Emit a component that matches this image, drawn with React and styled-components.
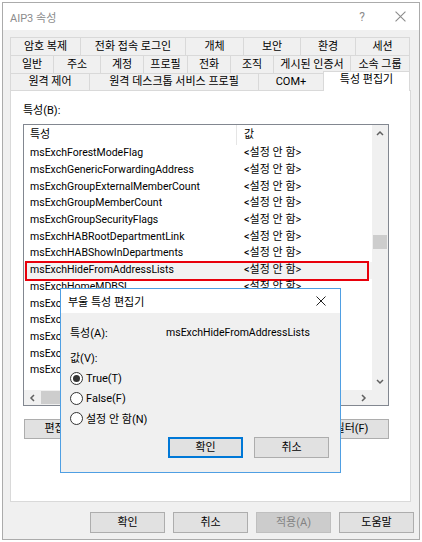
import styled, { createGlobalStyle } from 'styled-components'

const GlobalStyle = createGlobalStyle`
  body {
    margin: 0;
    background: #fff;
    font-family: Roboto, "Noto Sans CJK KR", sans-serif;
    font-size: 11px;
    color: #000;
  }
`

const topTabs = [
  { label: '암호 복제', w: 71 },
  { label: '전화 접속 로그인', w: 106 },
  { label: '개체', w: 59 },
  { label: '보안', w: 58 },
  { label: '환경', w: 56 },
  { label: '세션', w: 55 },
]

const midTabs = [
  { label: '일반', w: 44 },
  { label: '주소', w: 48 },
  { label: '계정', w: 44 },
  { label: '프로필', w: 45 },
  { label: '전화', w: 44 },
  { label: '조직', w: 44 },
  { label: '게시된 인증서', w: 78 },
  { label: '소속 그룹', w: 60 },
]

const bottomTabs = [
  { label: '원격 제어', w: 80 },
  { label: '원격 데스크톱 서비스 프로필', w: 170 },
  { label: 'COM+', w: 66 },
  { label: '특성 편집기', w: 87, active: true },
]

const attrs = [
  'msExchForestModeFlag',
  'msExchGenericForwardingAddress',
  'msExchGroupExternalMemberCount',
  'msExchGroupMemberCount',
  'msExchGroupSecurityFlags',
  'msExchHABRootDepartmentLink',
  'msExchHABShowInDepartments',
  'msExchHideFromAddressLists',
  'msExchHomeMDBSL',
  'msExchHomeServerName',
  'msExchImmutableId',
  'msExchIntendedMailboxPlan',
  'msExchLabeledURI',
  'msExchLitigationHoldDate',
]

const Window = styled.div`
  position: relative;
  margin: 2px;
  width: 418px;
  height: 538px;
  box-sizing: border-box;
  border: 1px solid #ababab;
  background: #f0f0f0;
  display: flex;
  flex-direction: column;
`

const TitleBar = styled.div`
  height: 27px;
  background: #fff;
  display: flex;
  align-items: center;
  padding-left: 7px;
  color: #8c8c8c;
`

const TitleText = styled.span`
  flex: 1;
`

const CaptionButton = styled.div`
  width: 38px;
  height: 27px;
  display: flex;
  align-items: center;
  justify-content: center;
  color: #8c8c8c;
  font-size: 12px;
`

const TabStrip = styled.div`
  padding: 7px 8px 0 7px;
  display: flex;
  flex-direction: column;
`

const TabRow = styled.div`
  display: flex;
  height: ${p => p.$h}px;
`

const Tab = styled.div`
  width: ${p => p.$w}px;
  box-sizing: border-box;
  margin-left: -1px;
  &:first-child { margin-left: 0; }
  border: 1px solid #d9d9d9;
  border-bottom: none;
  background: ${p => (p.$active ? '#fff' : '#f0f0f0')};
  display: flex;
  align-items: center;
  justify-content: center;
  line-height: 14px;
  position: relative;
  z-index: ${p => (p.$active ? 2 : 1)};
  margin-top: ${p => (p.$active ? -2 : 0)}px;
  margin-bottom: ${p => (p.$active ? -1 : 0)}px;
  padding-bottom: ${p => (p.$active ? 3 : 0)}px;
`

const Panel = styled.div`
  margin: 0 8px 0 7px;
  height: 412px;
  box-sizing: border-box;
  background: #fff;
  border: 1px solid #d9d9d9;
  padding: 13px 12px 0 12px;
  display: flex;
  flex-direction: column;
`

const FieldLabel = styled.div`
  line-height: 14px;
  margin-bottom: 6px;
`

const ListBox = styled.div`
  width: 366px;
  height: 282px;
  box-sizing: border-box;
  border: 1px solid #828790;
  display: grid;
  grid-template-columns: 1fr 16px;
  grid-template-rows: 1fr 15px;
  background: #fff;
`

const ListContent = styled.div`
  overflow: hidden;
  display: flex;
  flex-direction: column;
`

const ListRow = styled.div`
  display: flex;
  flex: 0 0 ${p => (p.$header ? 20 : 16.7)}px;
  align-items: center;
  position: relative;
  background: ${p => (p.$marked ? '#f2f2f2' : 'transparent')};

  ${p =>
    p.$marked &&
    `&::after {
      content: '';
      position: absolute;
      left: 1px;
      right: 3px;
      top: -1px;
      bottom: -2px;
      border: 2px solid #e8000b;
    }`}
`

const NameCell = styled.div`
  width: 213px;
  flex: none;
  box-sizing: border-box;
  padding-left: 6px;
  white-space: nowrap;
  line-height: 14px;
  font-size: ${p => (p.$korean ? 11 : 10.5)}px;
  align-self: stretch;
  display: flex;
  align-items: center;
  border-right: ${p => (p.$header ? '1px solid #e5e5e5' : 'none')};
`

const ValueCell = styled.div`
  padding-left: 7px;
  white-space: nowrap;
  line-height: 14px;
`

const VScroll = styled.div`
  background: #f0f0f0;
  display: flex;
  flex-direction: column;
  align-items: center;
`

const HScroll = styled.div`
  background: #f0f0f0;
  display: flex;
  align-items: center;
`

const ScrollCorner = styled.div`
  background: #f0f0f0;
`

const ArrowBox = styled.div`
  flex: none;
  width: ${p => (p.$h ? 17 : 16)}px;
  height: ${p => (p.$h ? 15 : 17)}px;
  display: flex;
  align-items: center;
  justify-content: center;
`

const Thumb = styled.div`
  background: #cdcdcd;
  flex: none;
  ${p =>
    p.$h
      ? `height: 13px; width: 210px;`
      : `width: 14px; height: 14px; margin-top: 93px;`}
`

const Spacer = styled.div`
  flex: 1;
`

const PanelButtons = styled.div`
  width: 366px;
  margin-top: 13px;
  display: flex;
  justify-content: space-between;
  padding-left: 1px;
  box-sizing: border-box;
`

const Button = styled.button`
  width: 75px;
  height: ${p => (p.$tall ? 21 : 20)}px;
  box-sizing: border-box;
  padding: 0;
  font-family: inherit;
  font-size: 11px;
  line-height: 14px;
  color: ${p => (p.$disabled ? '#838383' : '#000')};
  background: ${p => (p.$disabled ? '#cccccc' : '#e1e1e1')};
  border: ${p =>
    p.$default ? '2px solid #0078d7' : p.$disabled ? '1px solid #bfbfbf' : '1px solid #adadad'};
`

const Footer = styled.div`
  display: flex;
  justify-content: flex-end;
  gap: 8px;
  padding: 10px 5px 0 0;
`

const Dialog = styled.div`
  position: absolute;
  left: 57px;
  top: 285px;
  width: 281px;
  height: 185px;
  box-sizing: border-box;
  border: 1px solid #4f9fe3;
  background: #f0f0f0;
  z-index: 5;
  display: flex;
  flex-direction: column;
`

const DialogTitle = styled.div`
  height: 24px;
  background: #fff;
  display: flex;
  align-items: center;
  padding-left: 7px;
`

const DialogBody = styled.div`
  padding: 12px 9px 0 9px;
  display: flex;
  flex-direction: column;
`

const InfoRow = styled.div`
  display: flex;
  height: 14px;
  align-items: center;
  margin-top: ${p => p.$mt || 0}px;
`

const InfoKey = styled.span`
  width: 96px;
`

const InfoValue = styled.span`
  font-size: 10.5px;
`

const RadioRow = styled.label`
  display: flex;
  align-items: center;
  height: 20px;
  gap: 3px;
  margin-top: ${p => p.$mt || 0}px;
`

const RadioDot = styled.span`
  width: 13px;
  height: 13px;
  box-sizing: border-box;
  border: 1px solid #333;
  border-radius: 50%;
  background: #fff;
  display: flex;
  align-items: center;
  justify-content: center;

  &::after {
    content: '';
    width: 7px;
    height: 7px;
    border-radius: 50%;
    background: ${p => (p.$checked ? '#333' : 'transparent')};
  }
`

const DialogButtons = styled.div`
  display: flex;
  justify-content: flex-end;
  gap: 11px;
  padding-right: 2px;
  margin-top: 9px;
`

function Chevron({ dir }) {
  const paths = {
    up: 'M1 5 L4 2 L7 5',
    down: 'M1 2 L4 5 L7 2',
    left: 'M5 1 L2 4 L5 7',
    right: 'M2 1 L5 4 L2 7',
  }
  return (
    <svg width="8" height="8" viewBox="0 0 8 8">
      <path d={paths[dir]} fill="none" stroke="#606060" strokeWidth="1.5" />
    </svg>
  )
}

function CloseGlyph({ size = 10, color = '#333' }) {
  return (
    <svg width={size} height={size} viewBox="0 0 10 10">
      <path d="M0.5 0.5 L9.5 9.5 M9.5 0.5 L0.5 9.5" stroke={color} strokeWidth="1" />
    </svg>
  )
}

export default function App() {
  return (
    <>
      <GlobalStyle />
      <Window>
        <TitleBar>
          <TitleText>AIP3 속성</TitleText>
          <CaptionButton>?</CaptionButton>
          <CaptionButton>
            <CloseGlyph size={11} color="#8c8c8c" />
          </CaptionButton>
        </TitleBar>

        <TabStrip>
          <TabRow $h={18}>
            {topTabs.map(t => (
              <Tab key={t.label} $w={t.w}>{t.label}</Tab>
            ))}
          </TabRow>
          <TabRow $h={18}>
            {midTabs.map(t => (
              <Tab key={t.label} $w={t.w}>{t.label}</Tab>
            ))}
          </TabRow>
          <TabRow $h={17}>
            {bottomTabs.map(t => (
              <Tab key={t.label} $w={t.w} $active={t.active}>{t.label}</Tab>
            ))}
          </TabRow>
        </TabStrip>

        <Panel>
          <FieldLabel>특성(B):</FieldLabel>
          <ListBox>
            <ListContent>
              <ListRow $header>
                <NameCell $header $korean>특성</NameCell>
                <ValueCell>값</ValueCell>
              </ListRow>
              {attrs.map(a => (
                <ListRow key={a} $marked={a === 'msExchHideFromAddressLists'}>
                  <NameCell>{a}</NameCell>
                  <ValueCell>&lt;설정 안 함&gt;</ValueCell>
                </ListRow>
              ))}
            </ListContent>
            <VScroll>
              <ArrowBox><Chevron dir="up" /></ArrowBox>
              <Thumb />
              <Spacer />
              <ArrowBox><Chevron dir="down" /></ArrowBox>
            </VScroll>
            <HScroll>
              <ArrowBox $h><Chevron dir="left" /></ArrowBox>
              <Thumb $h />
              <Spacer />
              <ArrowBox $h><Chevron dir="right" /></ArrowBox>
            </HScroll>
            <ScrollCorner />
          </ListBox>
          <PanelButtons>
            <Button>편집(E)</Button>
            <Button>필터(F)</Button>
          </PanelButtons>
        </Panel>

        <Footer>
          <Button $tall>확인</Button>
          <Button $tall>취소</Button>
          <Button $tall $disabled>적용(A)</Button>
          <Button $tall>도움말</Button>
        </Footer>

        <Dialog>
          <DialogTitle>
            <TitleText>부울 특성 편집기</TitleText>
            <CaptionButton>
              <CloseGlyph size={10} color="#222" />
            </CaptionButton>
          </DialogTitle>
          <DialogBody>
            <InfoRow>
              <InfoKey>특성(A):</InfoKey>
              <InfoValue>msExchHideFromAddressLists</InfoValue>
            </InfoRow>
            <InfoRow $mt={11}>
              <InfoKey>값(V):</InfoKey>
            </InfoRow>
            <RadioRow $mt={4}>
              <RadioDot $checked />
              True(T)
            </RadioRow>
            <RadioRow>
              <RadioDot />
              False(F)
            </RadioRow>
            <RadioRow>
              <RadioDot />
              설정 안 함(N)
            </RadioRow>
            <DialogButtons>
              <Button $default $tall>확인</Button>
              <Button $tall>취소</Button>
            </DialogButtons>
          </DialogBody>
        </Dialog>
      </Window>
    </>
  )
}
